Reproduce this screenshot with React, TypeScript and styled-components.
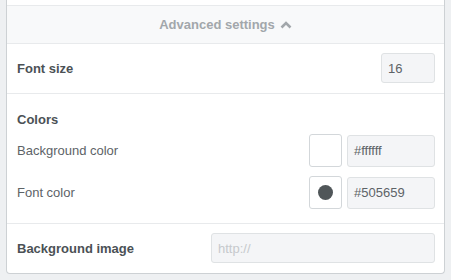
import React from "react";
import styled, { createGlobalStyle } from "styled-components";

const GlobalStyle = createGlobalStyle`
  html, body {
    margin: 0;
    padding: 0;
    background: #eef0f2;
  }
  body {
    font-family: "Liberation Sans", Arial, sans-serif;
  }
`;

const Page = styled.div`
  height: 280px;
  box-sizing: border-box;
  padding: 0 6px 7px 6px;
  background: #eef0f2;
`;

const Panel = styled.div`
  width: 439px;
  box-sizing: border-box;
  background: #ffffff;
  border: 1px solid #cdd1d4;
  border-top: none;
  border-radius: 0 0 4px 4px;
`;

const TopStrip = styled.div`
  height: 5px;
`;

const Header = styled.div`
  height: 37px;
  border-top: 1px solid #e8eaec;
  background: #f8f9fa;
  display: flex;
  align-items: center;
  justify-content: center;
  gap: 5px;
  font-size: 13px;
  font-weight: bold;
  color: #a2a7ab;
`;

const Section = styled.div<{ pad: string }>`
  border-top: 1px solid #e8eaec;
  padding: ${(p) => p.pad};
`;

const Row = styled.div<{ gap?: number }>`
  display: flex;
  align-items: center;
  justify-content: space-between;
  gap: ${(p) => p.gap ?? 0}px;
`;

const Title = styled.div`
  font-size: 13px;
  font-weight: bold;
  line-height: 17px;
  color: #4b5155;
`;

const Label = styled.div`
  font-size: 13px;
  line-height: 17px;
  color: #5d6367;
`;

const Field = styled.div<{ w: number; h: number; muted?: boolean }>`
  width: ${(p) => p.w}px;
  height: ${(p) => p.h}px;
  box-sizing: border-box;
  background: #f4f5f7;
  border: 1px solid #dfe2e4;
  border-radius: 3px;
  padding: 0 6px;
  display: flex;
  align-items: center;
  font-size: 13px;
  color: ${(p) => (p.muted ? "#c6c9cc" : "#5d6367")};
`;

const ColorList = styled.div`
  display: flex;
  flex-direction: column;
  gap: 9px;
  margin-top: 6px;
`;

const Picker = styled.div`
  display: flex;
  align-items: center;
  gap: 5px;
`;

const Swatch = styled.div`
  width: 33px;
  height: 33px;
  box-sizing: border-box;
  border: 1px solid #d3d7da;
  border-radius: 3px;
  background: #ffffff;
  display: flex;
  align-items: center;
  justify-content: center;
`;

const Dot = styled.div<{ color: string }>`
  width: 15px;
  height: 15px;
  border-radius: 50%;
  background: ${(p) => p.color};
`;

const colors = [
  { label: "Background color", value: "#ffffff", dot: false },
  { label: "Font color", value: "#505659", dot: true },
];

export default function App() {
  return (
    <Page>
      <GlobalStyle />
      <Panel>
        <TopStrip />
        <Header>
          Advanced settings
          <svg width="12" height="9" viewBox="0 0 12 9">
            <path
              d="M1.5 7.5 L6 3 L10.5 7.5"
              fill="none"
              stroke="#a2a7ab"
              strokeWidth="2.6"
            />
          </svg>
        </Header>
        <Section pad="9px 9px 10px 10px">
          <Row>
            <Title>Font size</Title>
            <Field w={54} h={30}>16</Field>
          </Row>
        </Section>
        <Section pad="17px 9px 14px 10px">
          <Title>Colors</Title>
          <ColorList>
            {colors.map((c) => (
              <Row key={c.label}>
                <Label>{c.label}</Label>
                <Picker>
                  <Swatch>{c.dot && <Dot color={c.value} />}</Swatch>
                  <Field w={88} h={32}>{c.value}</Field>
                </Picker>
              </Row>
            ))}
          </ColorList>
        </Section>
        <Section pad="9px 9px 10px 10px">
          <Row>
            <Title>Background image</Title>
            <Field w={224} h={30} muted>http://</Field>
          </Row>
        </Section>
      </Panel>
    </Page>
  );
}
